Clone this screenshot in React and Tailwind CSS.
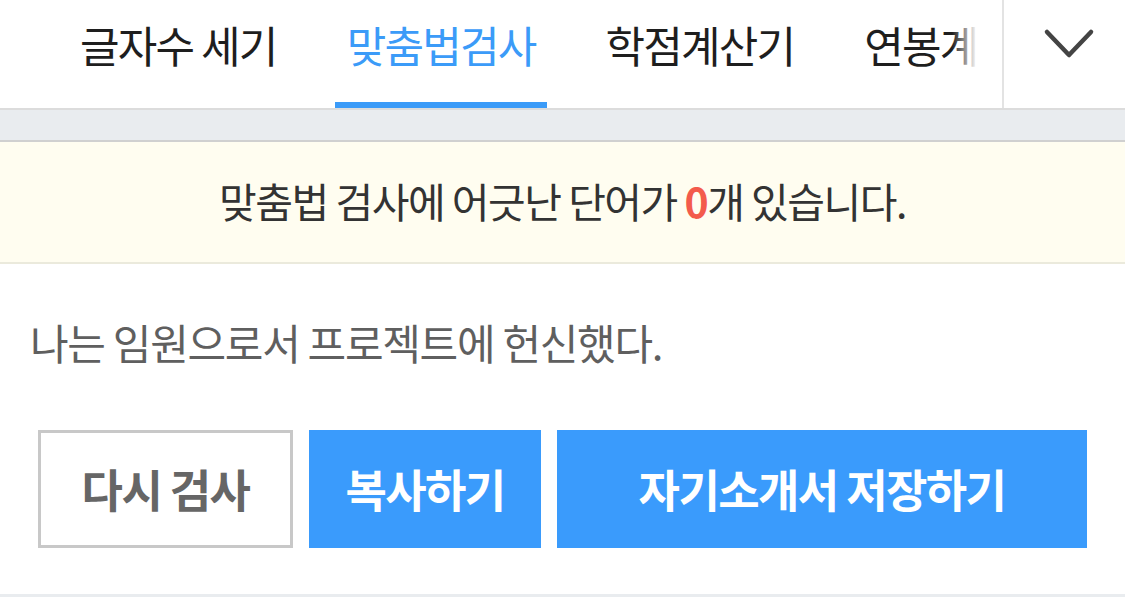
const tabs = ["글자수 세기", "맞춤법검사", "학점계산기", "연봉계산기"];

export default function App() {
  const active = 1;

  return (
    <div
      className="w-[1125px] h-[597px] bg-white overflow-hidden flex flex-col"
      style={{ fontFamily: '"Noto Sans CJK KR", "Noto Sans", sans-serif' }}
    >
      {/* Tab bar */}
      <div className="flex h-[110px] border-b-2 border-[#dcdcdc] shrink-0">
        <div className="relative w-[1002px] overflow-hidden">
          <div className="flex h-[110px] pl-[68px] gap-[46px] whitespace-nowrap">
            {tabs.map((tab, i) => (
              <div
                key={tab}
                className={`px-3 pt-[12px] h-[110px] text-[43px] leading-[64px] tracking-[-1.8px] ${
                  i === active
                    ? "text-[#3b9bf8] border-b-[8px] border-[#3b9bf8]"
                    : "text-[#1e1e1e]"
                }`}
              >
                {tab}
              </div>
            ))}
          </div>
          <div className="absolute top-0 left-0 h-[108px] w-[45px] bg-gradient-to-r from-white/80 to-white/0" />
          <div className="absolute top-0 right-0 h-[108px] w-[50px] bg-gradient-to-r from-white/0 via-white via-50% to-white" />
        </div>
        <div className="flex-1 border-l-2 border-[#e3e3e3] flex justify-center pl-[9px] pt-[26px]">
          <svg width="52" height="36" viewBox="0 0 52 36" fill="none">
            <polyline
              points="4,6 26,29 48,6"
              stroke="#444"
              strokeWidth="4.5"
              strokeLinecap="round"
              strokeLinejoin="round"
            />
          </svg>
        </div>
      </div>

      {/* Gray spacer */}
      <div className="h-[32px] bg-[#e9ecef] border-b-2 border-[#d0d0d0] shrink-0" />

      {/* Result banner */}
      <div className="h-[122px] bg-[#fffdf0] border-b-2 border-[#ebeadc] flex items-center justify-center shrink-0">
        <p className="text-[41px] tracking-[-1.5px] text-[#333] pb-[2px]">
          맞춤법 검사에 어긋난 단어가{" "}
          <span className="text-[#f35b4c] font-bold">0</span>개 있습니다.
        </p>
      </div>

      {/* Content */}
      <div className="flex-1 flex flex-col">
        <p className="px-[30px] pt-[48px] text-[42px] tracking-[-1.3px] text-[#5f5f5f] leading-[60px]">
          나는 임원으로서 프로젝트에 헌신했다.
        </p>
        <div className="flex gap-4 px-[38px] pt-[58px]">
          <button className="w-[255px] h-[118px] border-[3px] border-[#c8c8c8] bg-white text-[45px] font-bold tracking-[-1.6px] text-[#666]">
            다시 검사
          </button>
          <button className="w-[232px] h-[118px] bg-[#3a9bfc] text-[45px] font-bold tracking-[-1.6px] text-white">
            복사하기
          </button>
          <button className="flex-1 h-[118px] bg-[#3a9bfc] text-[45px] font-bold tracking-[-1.6px] text-white">
            자기소개서 저장하기
          </button>
        </div>
      </div>
      <div className="h-[3px] bg-[#e9ecef] shrink-0" />
    </div>
  );
}
